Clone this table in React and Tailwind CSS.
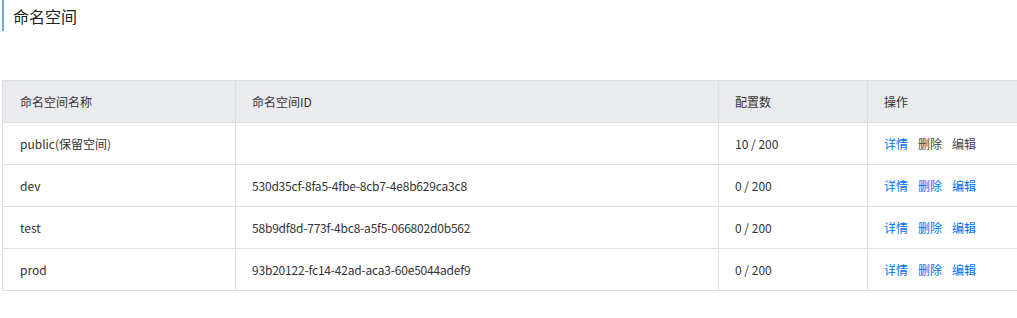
import React from "react";

const rows = [
  { name: "public(保留空间)", id: "", count: "10 / 200", reserved: true },
  { name: "dev", id: "530d35cf-8fa5-4fbe-8cb7-4e8b629ca3c8", count: "0 / 200" },
  { name: "test", id: "58b9df8d-773f-4bc8-a5f5-066802d0b562", count: "0 / 200" },
  { name: "prod", id: "93b20122-fc14-42ad-aca3-60e5044adef9", count: "0 / 200" },
];

const App = () => {
  return (
    <div
      className="w-[1017px] h-[318px] overflow-hidden bg-white text-[#333]"
      style={{ fontFamily: '"Noto Sans CJK SC", "Noto Sans", sans-serif' }}
    >
      {/* Title */}
      <div className="ml-[2px] h-[31px] border-l-2 border-[#6aa8de] pl-[9px] flex items-center">
        <h1 className="text-[16px] leading-none text-[#222]">命名空间</h1>
      </div>

      {/* Table */}
      <div className="mt-[49px] pl-[2px]">
        <table className="table-fixed w-[1030px] border-collapse text-[12px]">
          <colgroup>
            <col className="w-[233px]" />
            <col className="w-[483px]" />
            <col className="w-[149px]" />
            <col />
          </colgroup>
          <thead>
            <tr className="h-[42px] bg-[#eaebef]">
              <th className="border border-[#dcdee4] pl-[17px] text-left font-normal text-[#333]">命名空间名称</th>
              <th className="border border-[#dcdee4] pl-[16px] text-left font-normal text-[#333]">命名空间ID</th>
              <th className="border border-[#dcdee4] pl-[16px] text-left font-normal text-[#333]">配置数</th>
              <th className="border border-[#dcdee4] pl-[16px] text-left font-normal text-[#333]">操作</th>
            </tr>
          </thead>
          <tbody>
            {rows.map((r) => (
              <tr key={r.name} className="h-[42px]">
                <td className="border border-[#dcdee4] pl-[17px]">{r.name}</td>
                <td className="border border-[#dcdee4] pl-[16px] tracking-[-0.2px]">{r.id}</td>
                <td className="border border-[#dcdee4] pl-[16px]">{r.count}</td>
                <td className="border border-[#dcdee4] pl-[16px]">
                  <div className="flex gap-[10px]">
                    <span className="text-[#006eff]">详情</span>
                    <span className={r.reserved ? "text-[#444]" : "text-[#006eff]"}>删除</span>
                    <span className={r.reserved ? "text-[#444]" : "text-[#006eff]"}>编辑</span>
                  </div>
                </td>
              </tr>
            ))}
          </tbody>
        </table>
      </div>
    </div>
  );
};

export default App;
